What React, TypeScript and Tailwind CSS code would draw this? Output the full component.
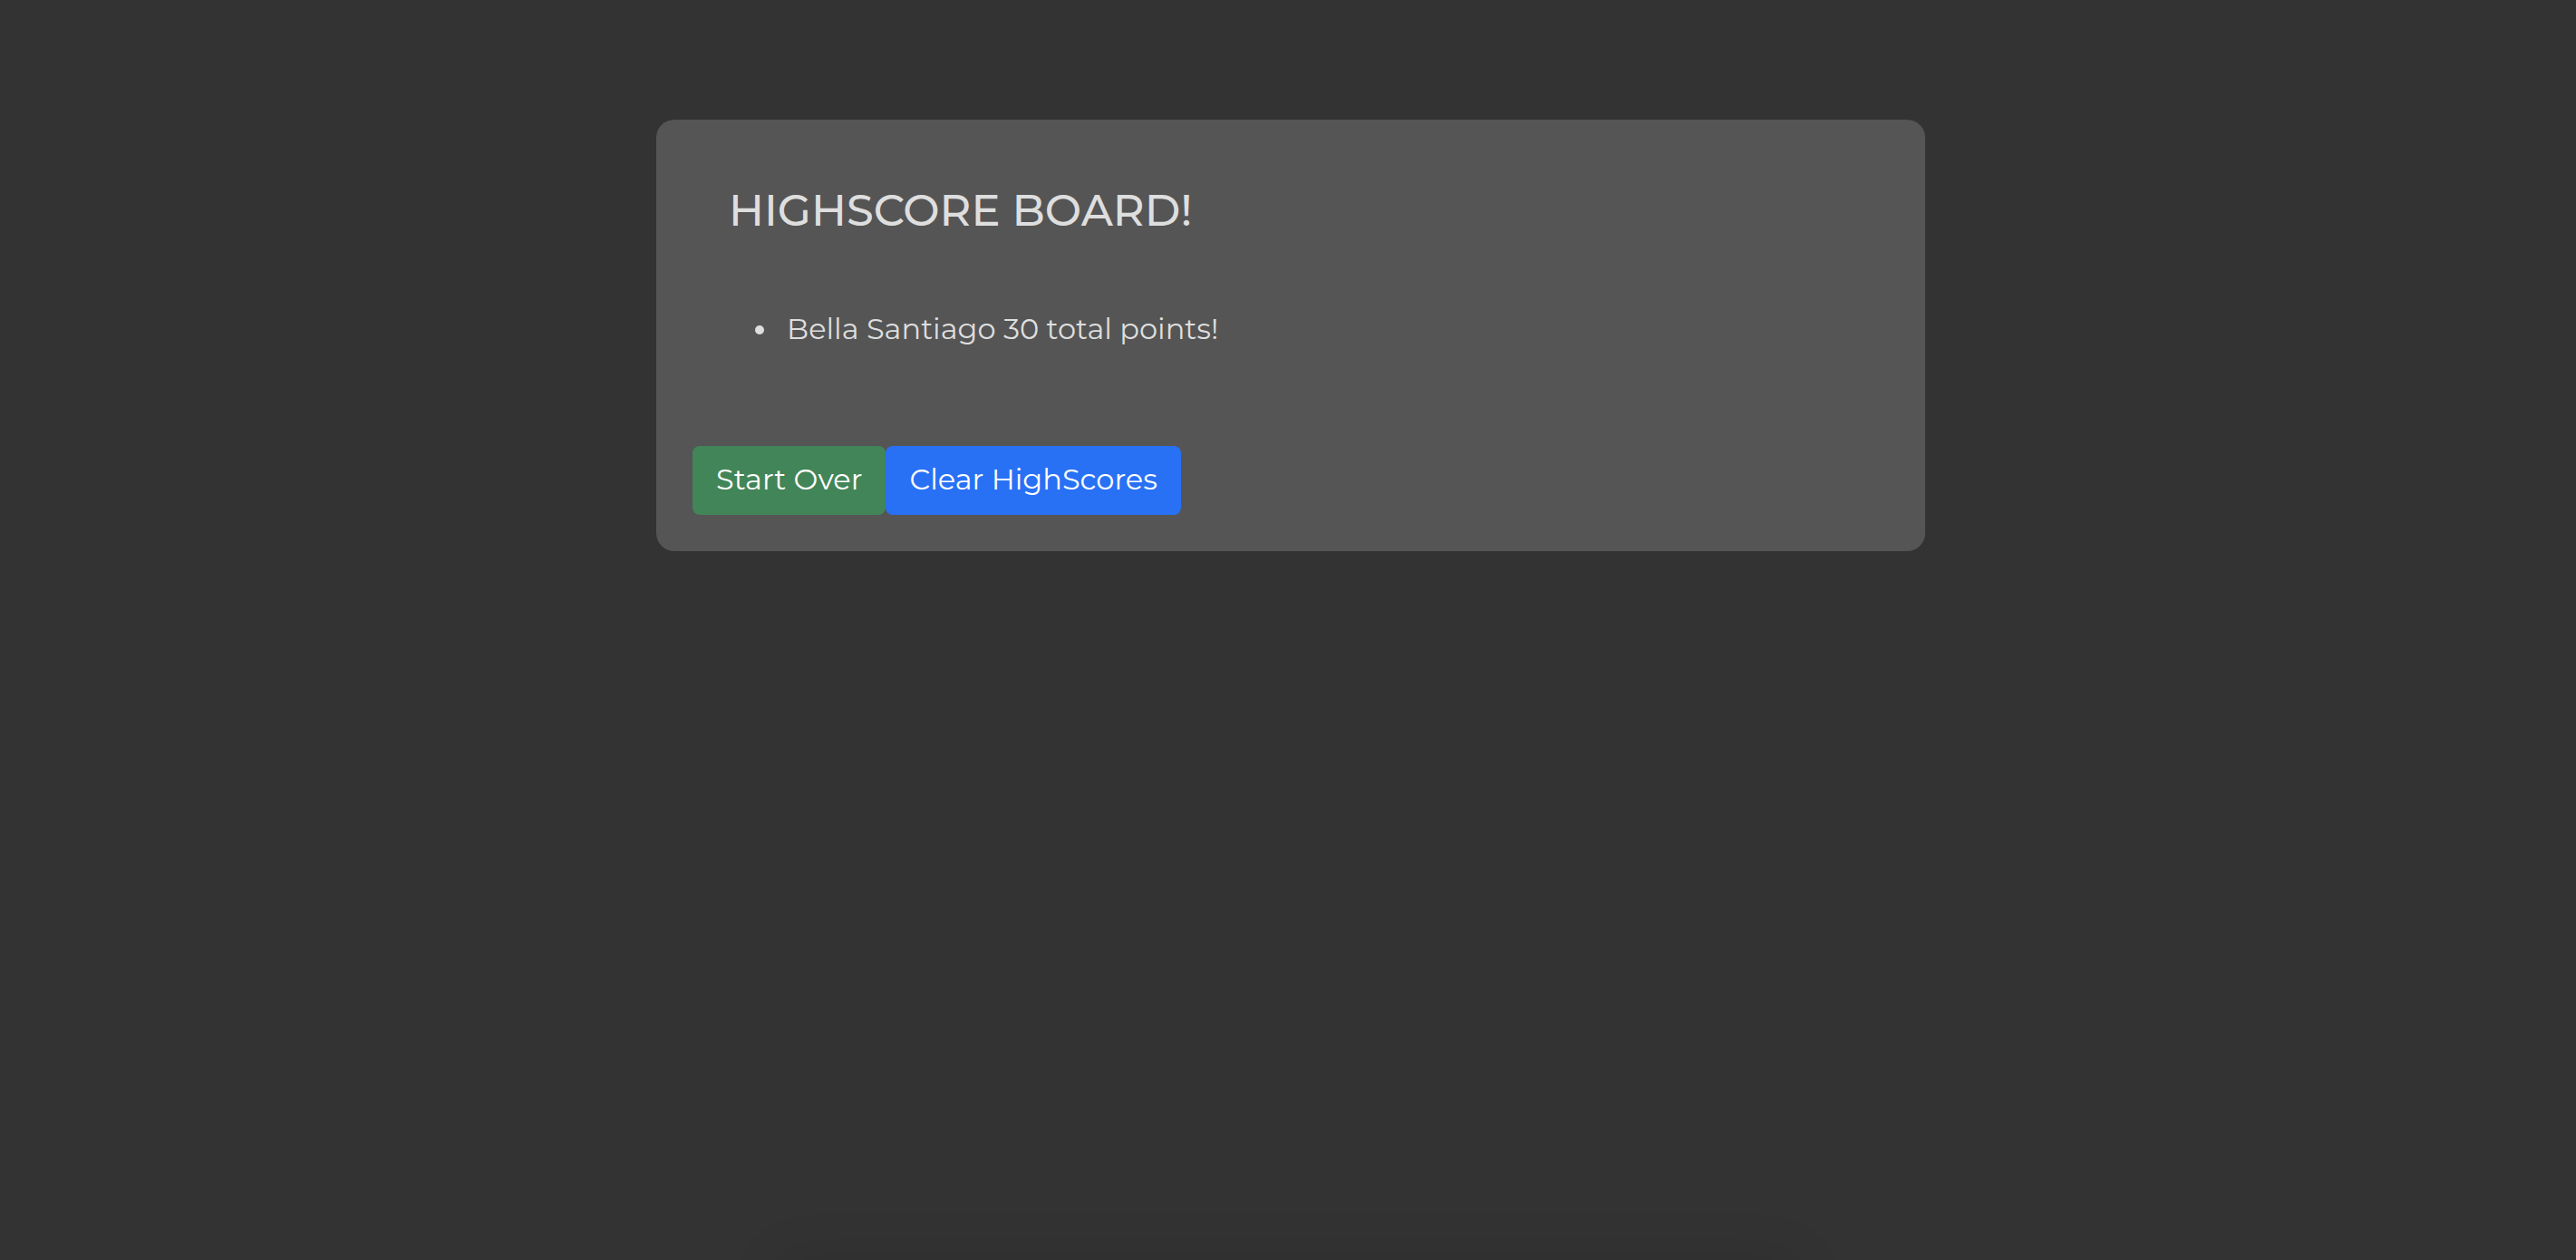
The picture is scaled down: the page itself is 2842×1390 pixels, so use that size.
const scores = [{ name: "Bella Santiago", points: 30 }];

export default function App() {
  return (
    <div className="flex min-h-screen flex-col overflow-hidden bg-[#333333] font-['Montserrat','Inter',sans-serif] text-[32px] leading-[48px] text-[#dedede]">
      <main className="grow pt-[132px] pl-1.5">
        <section className="mx-auto max-w-[1400px] rounded-[20px] bg-[#555555] p-10">
          <h1 className="px-10 pt-8 text-[48px] leading-[56px] font-medium">HIGHSCORE BOARD!</h1>
          <ul className="list-disc pt-[79px] pb-[105px] pl-24">
            {scores.map((score) => (
              <li key={score.name} className="pl-2">
                {score.name} {score.points} total points!
              </li>
            ))}
          </ul>
          <div className="flex">
            <button type="button" className="rounded-lg bg-[#428558] px-[26px] pt-[13px] pb-[15px] text-white">
              Start Over
            </button>
            <button type="button" className="rounded-lg bg-[#2871f5] px-[26px] pt-[13px] pb-[15px] text-white">
              Clear HighScores
            </button>
          </div>
        </section>
      </main>
      <footer className="mx-auto h-0 w-full max-w-[1060px] shadow-[0_30px_60px_30px_rgba(0,0,0,0.11)]" />
    </div>
  );
}
